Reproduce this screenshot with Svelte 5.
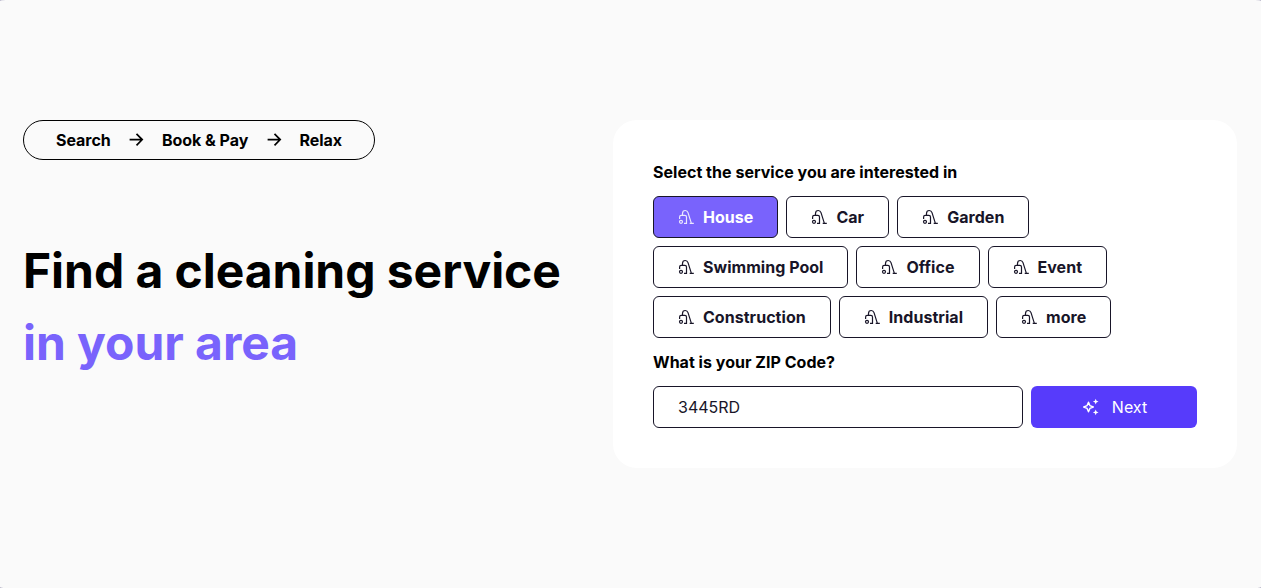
<script>
  const steps = ['Search', 'Book & Pay', 'Relax'];
  const services = ['House', 'Car', 'Garden', 'Swimming Pool', 'Office', 'Event', 'Construction', 'Industrial', 'more'];
  let selected = $state('House');
  let zip = $state('3445RD');
</script>

<main>
  <section class="hero">
    <div class="steps">
      {#each steps as step, i}
        {#if i > 0}
          <svg class="arrow" width="16" height="16" viewBox="0 0 16 16" fill="none" stroke="currentColor" stroke-width="1.7">
            <path d="M1.6 7.6H14M8.5 1.8L14.2 7.6L8.5 13.4" />
          </svg>
        {/if}
        <span>{step}</span>
      {/each}
    </div>
    <h1>Find a cleaning service<br /><em>in your area</em></h1>
  </section>

  <section class="card">
    <h2>Select the service you are interested in</h2>
    <div class="chips">
      {#each services as service}
        <button class="chip" class:active={selected === service} onclick={() => (selected = service)}>
          <svg width="17" height="16" viewBox="0 0 17 16" fill="none" stroke="currentColor" stroke-width="1.2">
            <circle cx="3" cy="12.8" r="1.5" />
            <path d="M1.6 10V8Q1.6 6.4 3.2 6.4H6.8Q8.5 6.4 8.5 8.1V14.4H6M4.5 6.2V4.4Q4.6 1.5 7.3 1.5Q9.3 1.5 10 3.6L13.4 14.4M11.7 14.4H15.8" />
          </svg>
          <span>{service}</span>
        </button>
      {/each}
    </div>
    <h2>What is your ZIP Code?</h2>
    <div class="form">
      <input aria-label="ZIP Code" bind:value={zip} />
      <button class="next">
        <svg width="18" height="18" viewBox="0 0 18 18" fill="none" stroke="currentColor" stroke-width="1.4" stroke-linejoin="round">
          <path d="M6.5 4.2L7.9 7.6L11.3 9L7.9 10.4L6.5 13.8L5.1 10.4L1.7 9L5.1 7.6Z" />
          <path d="M13.7 0.8L14.5 2.8L16.5 3.6L14.5 4.4L13.7 6.4L12.9 4.4L10.9 3.6L12.9 2.8ZM13.7 11.6L14.5 13.6L16.5 14.4L14.5 15.2L13.7 17.2L12.9 15.2L10.9 14.4L12.9 13.6Z" fill="currentColor" stroke="none" />
        </svg>
        <span>Next</span>
      </button>
    </div>
  </section>
</main>

<style>
  :global(body) {
    margin: 0;
    background: #9b98b5;
  }
  main {
    box-sizing: border-box;
    height: 588px;
    padding: 120px 24px 120px 23px;
    display: grid;
    grid-template-columns: 566px 624px;
    column-gap: 24px;
    background: #fafafa;
    border-radius: 6px / 1px;
    color: #000;
    font: 16px/24px Inter, sans-serif;
  }
  .steps {
    box-sizing: border-box;
    width: 352px;
    height: 40px;
    padding: 0 32px;
    display: flex;
    align-items: center;
    justify-content: space-between;
    border: 1px solid #000;
    border-radius: 20px;
    font-weight: 700;
    letter-spacing: -0.03px;
    white-space: nowrap;
  }
  h1 {
    margin: 75px 0 0;
    font-size: 48px;
    line-height: 72px;
    font-weight: 700;
    letter-spacing: -0.05px;
    white-space: nowrap;
  }
  em {
    font-style: normal;
    color: #7963fc;
  }
  .card {
    box-sizing: border-box;
    height: 348px;
    padding: 40px;
    background: #fff;
    border-radius: 24px;
  }
  h2 {
    margin: 0 0 12px;
    font-size: 16px;
    line-height: 24px;
    font-weight: 700;
    letter-spacing: 0.025px;
  }
  .chips {
    display: flex;
    flex-wrap: wrap;
    gap: 8px;
    width: 480px;
    margin-bottom: 12px;
  }
  button {
    font: inherit;
    cursor: pointer;
  }
  .chip {
    box-sizing: border-box;
    height: 42px;
    padding: 0 24px;
    display: flex;
    align-items: center;
    gap: 8px;
    border: 1px solid #181528;
    border-radius: 6px;
    background: #fff;
    color: #181528;
    font-weight: 700;
    letter-spacing: 0.036px;
  }
  .active {
    background: #7963fc;
    color: #fff;
  }
  .active svg {
    opacity: 0.85;
  }
  .form {
    display: flex;
    gap: 8px;
  }
  input {
    box-sizing: border-box;
    width: 370px;
    height: 42px;
    padding: 0 24px;
    border: 1px solid #181528;
    border-radius: 6px;
    background: #fff;
    color: #181528;
    font: inherit;
  }
  .next {
    width: 166px;
    height: 42px;
    padding: 0 0 0 1px;
    display: flex;
    align-items: center;
    justify-content: center;
    gap: 12px;
    border: 0;
    border-radius: 6px;
    background: #573bfb;
    color: #fff;
  }
</style>
